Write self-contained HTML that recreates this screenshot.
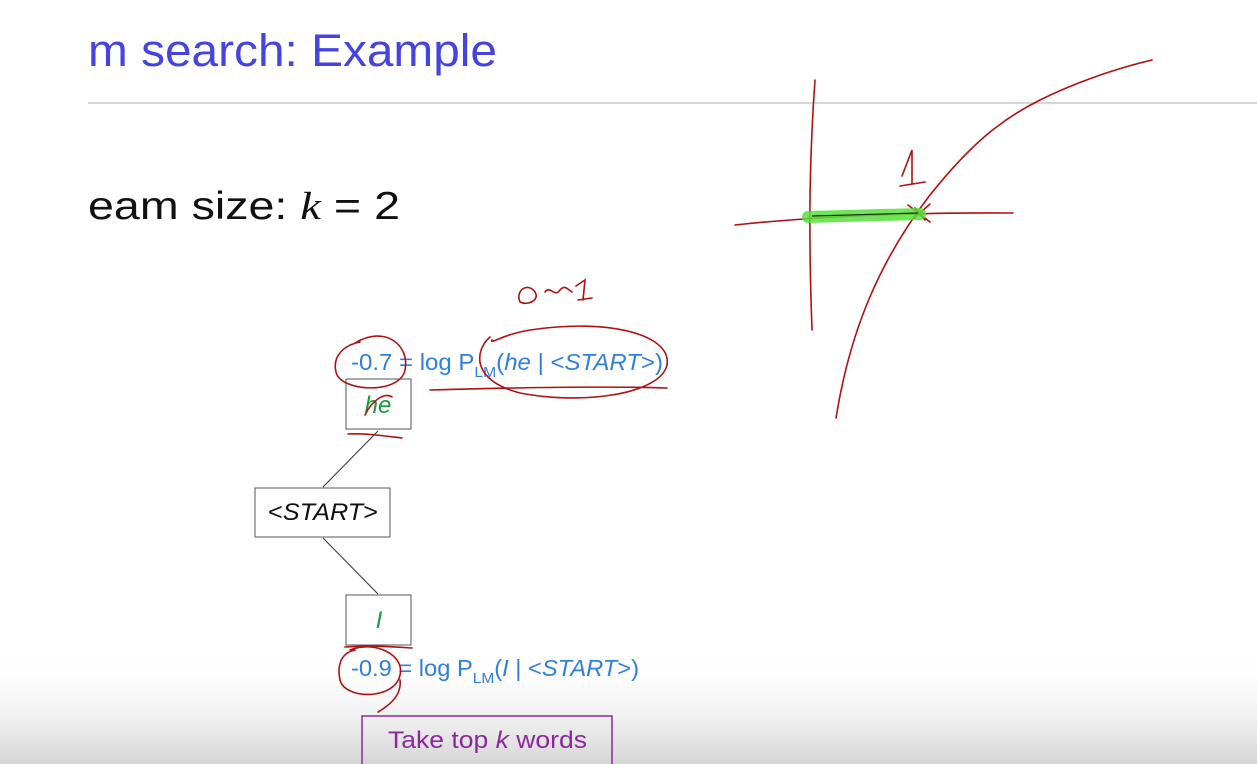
<!DOCTYPE html>
<html><head><meta charset="utf-8"><style>
html,body{margin:0;padding:0;width:1257px;height:764px;overflow:hidden;background:#fff}
svg{display:block}
</style></head><body>
<svg width="1257" height="764" viewBox="0 0 1257 764" xmlns="http://www.w3.org/2000/svg" font-family="Liberation Sans, DejaVu Sans, sans-serif">
<defs><linearGradient id="g" x1="0" y1="0" x2="0" y2="1">
<stop offset="0" stop-color="#fff" stop-opacity="0"/><stop offset="1" stop-color="#d4d4d4"/></linearGradient></defs>
<rect width="1257" height="764" fill="#fff"/>
<rect x="0" y="650" width="1257" height="114" fill="url(#g)"/>
<text x="88" y="66" font-size="45" fill="#4444e0" textLength="409" lengthAdjust="spacingAndGlyphs">m search: Example</text>
<line x1="88" y1="103" x2="1257" y2="103" stroke="#c8c8c8" stroke-width="1.5"/>
<text x="88" y="219" font-size="39" fill="#111" textLength="312" lengthAdjust="spacingAndGlyphs">eam size:  <tspan font-family="Liberation Serif, serif" font-style="italic">k</tspan>  =  2</text>
<rect x="346" y="379" width="65" height="50" fill="#fff" stroke="#555"/>
<text x="378" y="413" font-size="24" fill="#1a9a3a" font-style="italic" text-anchor="middle">he</text>
<rect x="255" y="488" width="135" height="49" fill="#fff" stroke="#555"/>
<text x="268" y="520" font-size="24" fill="#111" textLength="110" lengthAdjust="spacingAndGlyphs">&lt;<tspan font-style="italic">START</tspan>&gt;</text>
<rect x="346" y="595" width="65" height="50" fill="#fff" stroke="#555"/>
<text x="379" y="628" font-size="24" fill="#1a9a3a" font-style="italic" text-anchor="middle">I</text>
<line x1="323" y1="487" x2="378" y2="431" stroke="#333"/>
<line x1="323" y1="538" x2="378" y2="594" stroke="#333"/>
<text x="351" y="370" font-size="23" fill="#2f7fe0" textLength="312" lengthAdjust="spacingAndGlyphs">-0.7 = log P<tspan font-size="15" dy="7">LM</tspan><tspan dy="-7">(</tspan><tspan font-style="italic">he</tspan> | &lt;<tspan font-style="italic">START</tspan>&gt;)</text>
<text x="351" y="676" font-size="23" fill="#2f7fe0" textLength="288" lengthAdjust="spacingAndGlyphs">-0.9 = log P<tspan font-size="15" dy="7">LM</tspan><tspan dy="-7">(</tspan><tspan font-style="italic">I</tspan> | &lt;<tspan font-style="italic">START</tspan>&gt;)</text>
<path d="M362 764 V716 H612 V764" fill="none" stroke="#8a2a9a" stroke-width="1.5"/>
<text x="388" y="748" font-size="24" fill="#8a2a9a" textLength="199" lengthAdjust="spacingAndGlyphs">Take top <tspan font-style="italic">k</tspan> words</text>
<g fill="none" stroke="#b01010" stroke-width="1.6" stroke-linecap="round">
<path d="M520 302 C515 290 528 282 535 292 C540 300 528 306 520 302"/>
<path d="M545 292 C550 285 555 298 560 290 C565 284 568 290 572 292"/>
<path d="M576 286 L585 280 L583 300 M578 300 L592 298"/>
<path d="M355 343 C385 325 410 345 405 370 C400 395 340 392 336 372 C332 355 345 345 360 342"/>
<path d="M490 337 C475 350 470 380 520 393 C580 405 660 395 667 365 C672 335 610 318 530 330 C500 335 490 345 492 340"/>
<path d="M430 390 C500 388 600 386 667 388"/>
<path d="M348 434 C365 433 385 436 402 438"/>
<path d="M365 415 C372 400 385 392 392 397"/>
<path d="M350 650 C375 640 405 655 400 675 C395 700 345 700 340 680 C336 660 345 652 355 650"/>
<path d="M400 680 C402 695 390 705 378 712"/>
<path d="M345 647 C370 645 395 647 412 648"/>
<path d="M815 80 C810 150 808 220 812 330"/>
<path d="M735 225 C800 218 900 212 1013 213"/>
<path d="M836 418 C850 330 880 260 930 195 C970 145 1000 120 1040 100 C1070 85 1110 70 1152 60"/>
<path d="M902 176 L912 150 L912 184 M900 186 L925 182"/>
<path d="M908 205 L930 222 M912 220 L930 204 M915 208 L925 220"/>
</g>
<path d="M808 217 L920 214" stroke="#55e23a" stroke-width="12" stroke-linecap="round" opacity="0.85"/>
<path d="M812 216 L918 213" stroke="#222" stroke-width="1.2"/>
</svg>
</body></html>
